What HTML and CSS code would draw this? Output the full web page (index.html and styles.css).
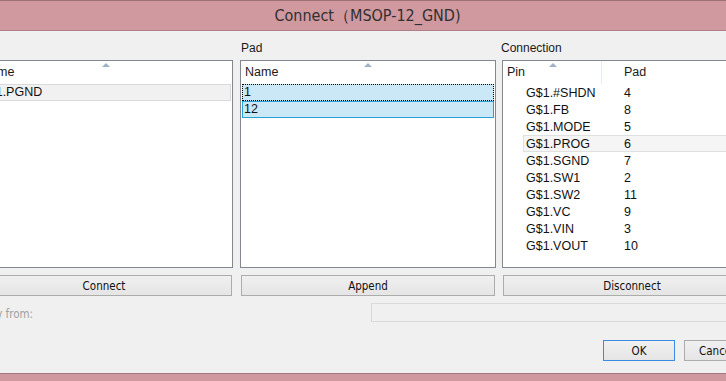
FILE: index.html
```html
<!DOCTYPE html>
<html>
<head>
<meta charset="utf-8">
<link rel="stylesheet" href="styles.css">
</head>
<body>
<div class="window">
  <div class="titlebar"><span class="title">Connect（MSOP-12_GND)</span></div>
  <div class="client">
    <div class="columns">
      <div class="col col-gate">
        <div class="label"></div>
        <div class="list">
          <div class="header">
            <div class="hcell hname">Name</div>
            <span class="sort sort-gate"></span>
          </div>
          <div class="row row-inactive">G$1.PGND</div>
        </div>
        <div class="btn btn-wide">Connect</div>
      </div>
      <div class="col col-pad">
        <div class="label">Pad</div>
        <div class="list">
          <div class="header">
            <div class="hcell hname">Name</div>
            <span class="sort sort-pad"></span>
          </div>
          <div class="row row-sel row-focus">1</div>
          <div class="row row-sel">12</div>
        </div>
        <div class="btn btn-wide">Append</div>
      </div>
      <div class="col col-conn">
        <div class="label">Connection</div>
        <div class="list">
          <div class="header">
            <div class="hcell hpin">Pin</div>
            <div class="hcell hpad">Pad</div>
            <span class="sort sort-conn"></span>
          </div>
          <div class="crow"><span class="cpin">G$1.#SHDN</span><span class="cpad">4</span></div>
          <div class="crow"><span class="cpin">G$1.FB</span><span class="cpad">8</span></div>
          <div class="crow"><span class="cpin">G$1.MODE</span><span class="cpad">5</span></div>
          <div class="crow crow-hover"><span class="cpin">G$1.PROG</span><span class="cpad">6</span></div>
          <div class="crow"><span class="cpin">G$1.SGND</span><span class="cpad">7</span></div>
          <div class="crow"><span class="cpin">G$1.SW1</span><span class="cpad">2</span></div>
          <div class="crow"><span class="cpin">G$1.SW2</span><span class="cpad">11</span></div>
          <div class="crow"><span class="cpin">G$1.VC</span><span class="cpad">9</span></div>
          <div class="crow"><span class="cpin">G$1.VIN</span><span class="cpad">3</span></div>
          <div class="crow"><span class="cpin">G$1.VOUT</span><span class="cpad">10</span></div>
        </div>
        <div class="btn btn-wide">Disconnect</div>
      </div>
    </div>
    <div class="copyrow">
      <span class="copylabel">Copy from:</span>
      <div class="field"></div>
    </div>
    <div class="okrow">
      <div class="btn btn-ok">OK</div>
      <div class="btn btn-cancel">Cancel</div>
    </div>
  </div>
  <div class="bottombar"></div>
</div>
</body>
</html>
```

FILE: styles.css
```css
html, body {
  margin: 0;
  padding: 0;
  background: #f0f0f0;
  overflow: hidden;
}
.window {
  width: 726px;
  height: 381px;
  display: flex;
  flex-direction: column;
  overflow: hidden;
  font-family: "Liberation Sans", Arial, sans-serif;
  font-size: 12px;
  color: #000;
}
.titlebar {
  height: 29px;
  flex: none;
  background: #d0989f;
  border-top: 1px solid #9f7177;
  border-bottom: 1px solid #ad7f86;
  display: flex;
  align-items: center;
  justify-content: center;
}
.title {
  font-family: "DejaVu Sans Condensed", "Liberation Sans Narrow", "Liberation Sans", sans-serif;
  font-size: 16px;
  color: #303030;
  padding-left: 9px;
  padding-top: 1px;
}
.client {
  flex: 1;
  background: #f0f0f0;
  display: flex;
  flex-direction: column;
}
.columns {
  display: flex;
  gap: 6px;
  margin-left: -24px;
  margin-top: 10px;
}
.col {
  display: flex;
  flex-direction: column;
  flex: none;
}
.col-gate { width: 257px; }
.col-pad { width: 256px; margin-left: 1px; }
.col-conn { width: 260px; }
.label {
  height: 19px;
  line-height: 14px;
  padding-left: 1px;
  color: #1a1a1a;
}
.col-conn .label { padding-left: 0; margin-left: -1px; }
.list {
  height: 206px;
  background: #fff;
  border: 1px solid #828790;
  position: relative;
  overflow: hidden;
}
.header {
  height: 23px;
  display: flex;
  position: relative;
}
.hcell {
  line-height: 23px;
  padding-left: 4px;
  font-size: 12.5px;
  color: #1a1a1a;
  box-sizing: border-box;
}
.hname { width: 100%; }
.hpin {
  width: 99px;
  border-right: 1px solid #e5eef6;
}
.hpad { padding-left: 22px; }
.sort {
  position: absolute;
  top: 2px;
  width: 0;
  height: 0;
  border-left: 4px solid transparent;
  border-right: 4px solid transparent;
  border-bottom: 4px solid #9fb2c8;
}
.sort-gate { left: 125px; }
.sort-pad { left: 123px; }
.sort-conn { left: 46px; }
.row {
  height: 17px;
  line-height: 17px;
  padding-left: 2px;
  box-sizing: border-box;
  font-size: 12.5px;
  color: #111;
}
.row-inactive {
  background: #f1f1f1;
  border-top: 1px solid #dadada;
  border-bottom: 1px solid #dadada;
  border-right: 1px solid #dadada;
  line-height: 15px;
  margin-right: 1px;
}
.row-sel {
  background: #cbe8f6;
  border: 1px solid #26a0da;
  line-height: 15px;
  padding-left: 1px;
  margin: 0 1px;
}
.row-focus {
  border: 1px dotted #000;
}
.crow {
  height: 17px;
  display: flex;
  align-items: center;
  margin-left: 20px;
  box-sizing: border-box;
  font-size: 12.5px;
  color: #111;
}
.crow-hover {
  background: #f5f5f5;
  border-top: 1px solid #e0e0e0;
  border-bottom: 1px solid #e0e0e0;
  border-left: 1px solid #e0e0e0;
}
.cpin {
  width: 98px;
  padding-left: 3px;
}
.crow-hover .cpin { padding-left: 2px; }
.btn {
  height: 19px;
  border: 1px solid #acacac;
  background: linear-gradient(#f0f0f0, #e5e5e5);
  display: flex;
  align-items: center;
  justify-content: center;
  font-family: "DejaVu Sans Condensed", "Liberation Sans", sans-serif;
  font-size: 11.5px;
  color: #111;
}
.btn-wide {
  margin: 7px 1px 0 1px;
}
.col-gate .btn-wide { margin-left: 0; }
.copyrow {
  display: flex;
  align-items: center;
  margin-top: 7px;
  margin-left: -24px;
  height: 19px;
}
.copylabel {
  width: 395px;
  flex: none;
  color: #a0a0a0;
  font-family: "DejaVu Sans Condensed", "Liberation Sans", sans-serif;
  font-size: 11.5px;
  padding-top: 2px;
}
.field {
  width: 360px;
  height: 17px;
  flex: none;
  border: 1px solid #d9d9d9;
  background: #f0f0f0;
}
.okrow {
  display: flex;
  gap: 9px;
  margin-top: 18px;
  margin-left: 603px;
}
.btn-ok {
  width: 70px;
  border-color: #3c8be3;
  flex: none;
}
.btn-cancel {
  width: 70px;
  flex: none;
  justify-content: flex-start;
  padding-left: 14px;
}
.bottombar {
  height: 7px;
  flex: none;
  margin-top: auto;
  background: #d0989f;
  border-top: 1px solid #a57a80;
}
```
